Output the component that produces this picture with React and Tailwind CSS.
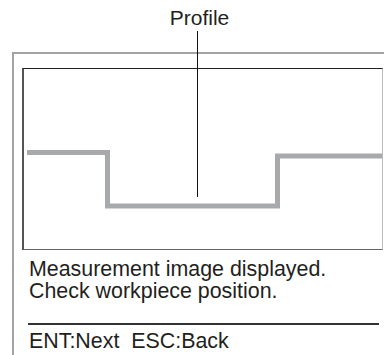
export default function App() {
  return (
    <div
      className="relative w-[384px] h-[355px] overflow-hidden bg-white text-[#231f20]"
      style={{ fontFamily: '"Liberation Sans", Arial, sans-serif' }}
    >
      <div className="h-[52px] flex justify-center pl-[15px] pt-[8px]">
        <span className="text-[21px] leading-[20px]">Profile</span>
      </div>
      <div className="ml-[12px] h-[303px] border-l-2 border-t-2 border-[#a3a3a3] pl-[8px] pt-[14px]">
        <div className="w-[361px] h-[182px] border-t border-t-[#222] border-l-2 border-l-[#555] border-r border-r-[#bbb] border-b border-b-[#666]">
          <svg width="358" height="180" viewBox="0 0 358 180" className="block">
            <polyline
              points="3,83.5 83.5,83.5 83.5,137 253.5,137 253.5,87 358,87"
              fill="none"
              stroke="#a8a9ac"
              strokeWidth="5"
              strokeLinejoin="miter"
            />
          </svg>
        </div>
        <div className="pl-[7px] pt-[8px] text-[21.4px] leading-[22px]">
          <div>Measurement image displayed.</div>
          <div>Check workpiece position.</div>
        </div>
        <div className="ml-[6px] mt-[21px] w-[351px] h-[2px] bg-[#333]" />
        <div className="pl-[7px] pt-[6px] text-[21.4px] leading-[20px] whitespace-pre">ENT:Next  ESC:Back</div>
      </div>
      <div className="absolute left-[197px] top-[31px] w-px h-[166px] bg-[#111]" />
    </div>
  );
}
